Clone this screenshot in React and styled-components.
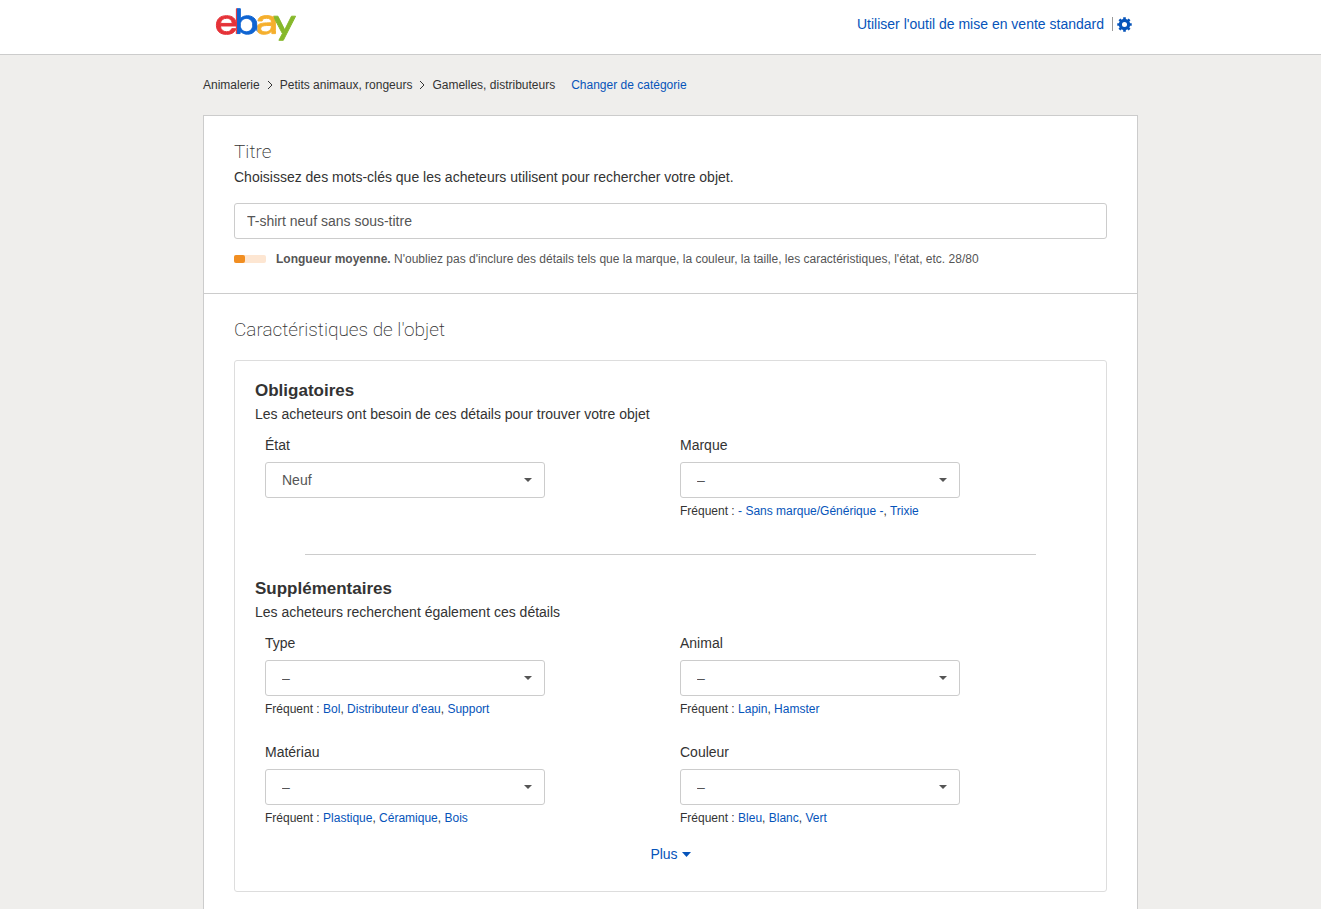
import React, { useState } from 'react'
import styled, { createGlobalStyle } from 'styled-components'
import { SiEbay } from 'react-icons/si'

const GlobalStyle = createGlobalStyle`
    * {
        box-sizing: border-box;
    }
    body {
        margin: 0;
        background: #efeeec;
        color: #333;
        font-family: "Liberation Sans", Arial, sans-serif;
        font-size: 14px;
        line-height: 20px;
        overflow-x: hidden;
    }
    h1, h2, h3, p, ul, ol {
        margin: 0;
        padding: 0;
    }
`

const Header = styled.header`
    background: #fff;
    border-bottom: 1px solid #ccc;
`

const Wrapper = styled.div`
    max-width: 955px;
    margin: 0 auto;
    padding-left: 20px;
`

const HeaderInner = styled(Wrapper)`
    display: flex;
    align-items: center;
    justify-content: space-between;
    height: 54px;
    padding: 0 6px 6px 33px;
`

const Link = styled.a`
    color: #0654ba;
    text-decoration: none;
    &:hover {
        text-decoration: underline;
    }
`

const LogoLink = styled.a`
    display: block;
    height: 33px;
`

const LogoMark = styled(SiEbay)`
    display: block;
    width: 80px;
    height: 33px;
    overflow: visible;
    fill: url(#ebayColors);
    stroke: url(#ebayColors);
    stroke-width: 0.3px;
`

const Defs = styled.svg`
    position: absolute;
    width: 0;
    height: 0;
`

const HeaderTools = styled.div`
    display: flex;
    align-items: center;
`

const Divider = styled.span`
    width: 1px;
    height: 14px;
    margin: 0 4px 0 8px;
    background: #999;
`

const IconButton = styled.button`
    display: flex;
    padding: 0;
    border: 0;
    background: none;
    color: #0654ba;
    cursor: pointer;
`

const Breadcrumb = styled.ol`
    display: flex;
    flex-wrap: wrap;
    align-items: center;
    padding: 20px 0;
    list-style: none;
    font-size: 12px;
`

const Crumb = styled.li`
    display: flex;
    align-items: center;
    margin-right: ${({ last }) => (last ? '16px' : '0')};
`

const CrumbArrow = styled.svg`
    width: 6px;
    height: 10px;
    margin: 0 7px;
    fill: none;
    stroke: #333;
`

const Card = styled.main`
    background: #fff;
    border: 1px solid #ccc;
`

const Section = styled.section`
    padding: 24px 30px 26px;
    border-bottom: 1px solid #ccc;
`

const SectionTitle = styled.h2`
    font-family: Roboto, "Liberation Sans", sans-serif;
    font-size: 19px;
    font-weight: 200;
    line-height: 24px;
`

const Description = styled.p`
    margin-top: 3px;
`

const TitleInput = styled.input`
    display: block;
    width: 100%;
    height: 36px;
    margin-top: 16px;
    padding: 0 12px;
    border: 1px solid #ccc;
    border-radius: 3px;
    color: #555;
    font: inherit;
`

const Hint = styled.div`
    display: flex;
    align-items: center;
    gap: 10px;
    margin-top: 12px;
    color: #555;
    font-size: 12px;
    line-height: 16px;
`

const Meter = styled.div`
    width: 32px;
    height: 8px;
    border-radius: 2px;
    background: #fde6d2;
`

const MeterFill = styled.div`
    height: 8px;
    border-radius: 2px;
    background: #f18e21;
`

const Panel = styled.div`
    margin-top: 18px;
    padding: 20px 20px 27px;
    border: 1px solid #ddd;
    border-radius: 3px;
`

const GroupTitle = styled.h3`
    font-size: 17px;
    font-weight: 700;
    line-height: 20px;
`

const FieldGrid = styled.div`
    display: grid;
    grid-template-columns: 1fr 1fr;
    row-gap: 25px;
    margin-top: 11px;
    padding-right: 1px;
`

const FieldCell = styled.div`
    padding: 0 10px;
`

const Label = styled.label`
    display: block;
`

const SelectBox = styled.div`
    position: relative;
    max-width: 280px;
    margin-top: 7px;
`

const Select = styled.select`
    display: block;
    width: 100%;
    height: 36px;
    padding: 0 16px;
    border: 1px solid #ccc;
    border-radius: 3px;
    appearance: none;
    background: #fff;
    color: #555;
    font: inherit;
`

const SelectCaret = styled.svg`
    position: absolute;
    top: 16px;
    right: 13px;
    width: 8px;
    height: 4px;
    fill: #555;
    pointer-events: none;
`

const Frequent = styled.p`
    margin-top: 5px;
    font-size: 12px;
    line-height: 16px;
`

const Separator = styled.hr`
    height: 1px;
    margin: 35px 50px 24px;
    border: 0;
    background: #ccc;
`

const MoreButton = styled.button`
    display: flex;
    align-items: center;
    gap: 4px;
    margin: 18px auto 0;
    padding: 0;
    border: 0;
    background: none;
    color: #0654ba;
    font: inherit;
    cursor: pointer;
`

const MoreCaret = styled.svg`
    width: 9px;
    height: 5px;
    fill: #0654ba;
`

const categories = ['Animalerie', 'Petits animaux, rongeurs', 'Gamelles, distributeurs']

const required = [
    { id: 'etat', label: 'État', value: 'Neuf', frequent: [] },
    { id: 'marque', label: 'Marque', value: '–', frequent: ['- Sans marque/Générique -', 'Trixie'] },
]

const additional = [
    { id: 'type', label: 'Type', value: '–', frequent: ['Bol', "Distributeur d'eau", 'Support'] },
    { id: 'animal', label: 'Animal', value: '–', frequent: ['Lapin', 'Hamster'] },
    { id: 'materiau', label: 'Matériau', value: '–', frequent: ['Plastique', 'Céramique', 'Bois'] },
    { id: 'couleur', label: 'Couleur', value: '–', frequent: ['Bleu', 'Blanc', 'Vert'] },
]

const Logo = () => (
    <LogoLink href="#" aria-label="eBay">
        <Defs aria-hidden="true">
            <defs>
                <pattern id="ebayColors" patternUnits="userSpaceOnUse" x="-1" width="26" height="24" viewBox="-1 0 26 24">
                    <path fill="#e53238" d="M-1 0h7.25v24H-1z" />
                    <path fill="#0f64d2" d="M6.25 0h6.2v24h-6.2z" />
                    <path fill="#f5af2d" d="M12.45 0h7v24h-7z" />
                    <path fill="#86b82a" d="M17.4 0H25v24h-7.6v-7l2-2.5L17.4 10z" />
                </pattern>
            </defs>
        </Defs>
        <LogoMark viewBox="0 7 24 10" />
    </LogoLink>
)

const Gear = () => (
    <svg width="15" height="15" viewBox="0 0 16 16" fill="none" stroke="currentColor" aria-hidden="true">
        <circle cx="8" cy="8" r="4.4" strokeWidth="3.4" />
        <path strokeWidth="2.8" d="M8 .3v3M8 12.7v3M.3 8h3M12.7 8h3M2.6 2.6l2.2 2.2M11.2 11.2l2.2 2.2M2.6 13.4l2.2-2.2M11.2 4.8l2.2-2.2" />
    </svg>
)

const Field = ({ field }) => {
    const [value, setValue] = useState(field.value)
    return (
        <FieldCell>
            <Label htmlFor={field.id}>{field.label}</Label>
            <SelectBox>
                <Select id={field.id} value={value} onChange={(e) => setValue(e.target.value)}>
                    <option>{field.value}</option>
                    {field.frequent.map((item) => (
                        <option key={item}>{item}</option>
                    ))}
                </Select>
                <SelectCaret viewBox="0 0 8 4" aria-hidden="true">
                    <path d="M0 0h8L4 4z" />
                </SelectCaret>
            </SelectBox>
            {field.frequent.length > 0 && (
                <Frequent>
                    Fréquent :{' '}
                    {field.frequent.map((item, index) => (
                        <React.Fragment key={item}>
                            {index > 0 && ', '}
                            <Link href="#">{item}</Link>
                        </React.Fragment>
                    ))}
                </Frequent>
            )}
        </FieldCell>
    )
}

export default function App() {
    const [title, setTitle] = useState('T-shirt neuf sans sous-titre')

    return (
        <>
            <GlobalStyle />
            <Header>
                <HeaderInner>
                    <Logo />
                    <HeaderTools>
                        <Link href="#">Utiliser l'outil de mise en vente standard</Link>
                        <Divider />
                        <IconButton type="button" aria-label="Paramètres">
                            <Gear />
                        </IconButton>
                    </HeaderTools>
                </HeaderInner>
            </Header>
            <Wrapper>
                <Breadcrumb>
                    {categories.map((item, index) => (
                        <Crumb key={item} last={index === categories.length - 1 ? 1 : undefined}>
                            {index > 0 && (
                                <CrumbArrow viewBox="0 0 6 10" aria-hidden="true">
                                    <path d="M1 1l4 4-4 4" />
                                </CrumbArrow>
                            )}
                            {item}
                        </Crumb>
                    ))}
                    <li>
                        <Link href="#">Changer de catégorie</Link>
                    </li>
                </Breadcrumb>
                <Card>
                    <Section>
                        <SectionTitle as="label" htmlFor="titre">Titre</SectionTitle>
                        <Description>Choisissez des mots-clés que les acheteurs utilisent pour rechercher votre objet.</Description>
                        <TitleInput id="titre" maxLength={80} value={title} onChange={(e) => setTitle(e.target.value)} />
                        <Hint>
                            <Meter>
                                <MeterFill style={{ width: `${(title.length / 80) * 100}%` }} />
                            </Meter>
                            <p>
                                <b>Longueur moyenne.</b> N'oubliez pas d'inclure des détails tels que la marque, la couleur, la taille, les caractéristiques, l'état, etc. {title.length}/80
                            </p>
                        </Hint>
                    </Section>
                    <Section>
                        <SectionTitle>Caractéristiques de l'objet</SectionTitle>
                        <Panel>
                            <GroupTitle>Obligatoires</GroupTitle>
                            <Description>Les acheteurs ont besoin de ces détails pour trouver votre objet</Description>
                            <FieldGrid>
                                {required.map((field) => (
                                    <Field key={field.id} field={field} />
                                ))}
                            </FieldGrid>
                            <Separator />
                            <GroupTitle>Supplémentaires</GroupTitle>
                            <Description>Les acheteurs recherchent également ces détails</Description>
                            <FieldGrid>
                                {additional.map((field) => (
                                    <Field key={field.id} field={field} />
                                ))}
                            </FieldGrid>
                            <MoreButton type="button">
                                Plus
                                <MoreCaret viewBox="0 0 9 5" aria-hidden="true">
                                    <path d="M0 0h9L4.5 5z" />
                                </MoreCaret>
                            </MoreButton>
                        </Panel>
                    </Section>
                </Card>
            </Wrapper>
        </>
    )
}
